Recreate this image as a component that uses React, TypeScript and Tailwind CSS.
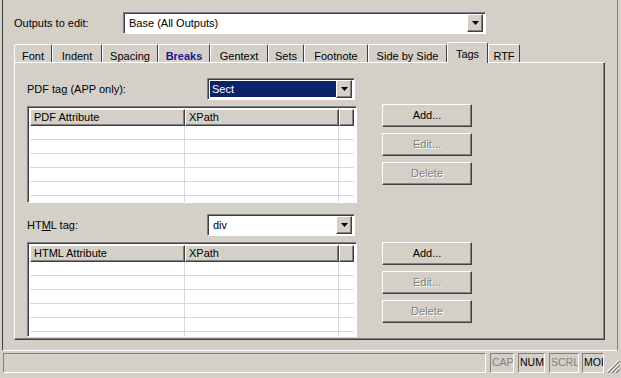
const raised =
  "border border-t-white border-l-white border-r-[#404040] border-b-[#404040] shadow-[inset_-1px_-1px_0_#808080]";
const sunken =
  "border border-t-[#808080] border-l-[#808080] border-r-white border-b-white shadow-[inset_1px_1px_0_#404040]";
const disabledText = "text-[#808080] [text-shadow:1px_1px_0_#ffffff]";

const tabs = [
  { label: "Font", w: "w-[38px]" },
  { label: "Indent", w: "w-[50px]" },
  { label: "Spacing", w: "w-[56px]" },
  { label: "Breaks", w: "w-[52px]", hot: true },
  { label: "Gentext", w: "w-[58px]" },
  { label: "Sets", w: "w-[36px]" },
  { label: "Footnote", w: "w-[64px]" },
  { label: "Side by Side", w: "w-[79px]" },
  { label: "Tags", w: "w-[41px]", active: true },
  { label: "RTF", w: "w-[32px]" },
];

function DropButton() {
  return (
    <div className={`flex h-[18px] w-[16px] shrink-0 items-center justify-center bg-[#d4d0c8] ${raised}`}>
      <svg width="7" height="4" viewBox="0 0 7 4">
        <path d="M0 0h7L3.5 4z" fill="#000" />
      </svg>
    </div>
  );
}

function Select({ value, highlighted, width }: { value: string; highlighted?: boolean; width: string }) {
  return (
    <div className={`flex h-[22px] ${width} items-center bg-white p-[2px] ${sunken}`}>
      <div
        className={
          highlighted
            ? "flex h-full flex-1 items-center bg-[#0a246a] pl-[2px] text-white"
            : "flex h-full flex-1 items-center pl-[3px] text-black"
        }
      >
        {value}
      </div>
      <DropButton />
    </div>
  );
}

function Button({ label, disabled }: { label: string; disabled?: boolean }) {
  return (
    <div
      className={`flex h-[23px] w-[90px] items-center justify-center bg-[#d4d0c8] ${raised} ${
        disabled ? disabledText : "text-black"
      }`}
    >
      {label}
    </div>
  );
}

function AttrTable({ first, height }: { first: string; height: string }) {
  return (
    <div className={`flex w-[330px] ${height} flex-col overflow-hidden bg-white p-[2px] ${sunken}`}>
      <div className="flex h-[17px] shrink-0 bg-[#d4d0c8]">
        <div className={`flex w-[155px] items-center pl-[3px] ${raised}`}>{first}</div>
        <div className={`flex w-[154px] items-center pl-[3px] ${raised}`}>XPath</div>
        <div className={`flex-1 ${raised}`} />
      </div>
      {[0, 1, 2, 3, 4, 5].map((i) => (
        <div key={i} className="flex h-[14px] shrink-0 border-b border-[#d8d8d8]">
          <div className="w-[155px] border-r border-[#d8d8d8]" />
          <div className="w-[154px] border-r border-[#d8d8d8]" />
        </div>
      ))}
    </div>
  );
}

function StatusPane({ label, disabled, w }: { label: string; disabled?: boolean; w: string }) {
  return (
    <div
      className={`flex h-[20px] ${w} shrink-0 items-center overflow-hidden whitespace-nowrap border border-t-[#808080] border-l-[#808080] border-r-white border-b-white pl-px text-[10.5px] ${
        disabled ? "text-[#808080]" : "text-black"
      }`}
    >
      {label}
    </div>
  );
}

export default function App() {
  return (
    <div className="flex h-[378px] w-[621px] flex-col overflow-hidden bg-[#d4d0c8] font-['Liberation_Sans',Arial,sans-serif] text-[11px] text-black">
      <div className="ml-[2px] mr-[3px] flex h-[351px] shrink-0 flex-col border-l border-r border-b border-l-[#404040] border-r-[#808080] border-b-white pl-[11px] pr-[10px]">
        <div className="mt-[12px] flex h-[22px] items-center">
          <div className="w-[109px]">Outputs to edit:</div>
          <Select value="Base (All Outputs)" width="w-[363px]" />
        </div>

        <div className="mt-[8px] flex h-[20px] items-end">
          {tabs.map((t) =>
            t.active ? (
              <div
                key={t.label}
                className={`relative z-10 -mb-px flex h-[21px] ${t.w} items-start justify-center rounded-t-[2px] border-t border-l border-r border-t-white border-l-white border-r-[#404040] bg-[#d4d0c8] pt-[3px]`}
              >
                {t.label}
              </div>
            ) : (
              <div
                key={t.label}
                className={`flex h-[18px] ${t.w} items-start justify-center rounded-t-[2px] border-t border-l border-r border-t-white border-l-white border-r-[#404040] pt-[3px] ${
                  t.hot ? "font-bold text-[#1a1a9a]" : ""
                }`}
              >
                {t.label}
              </div>
            )
          )}
        </div>

        <div className={`flex h-[278px] w-[591px] flex-col pl-[12px] pt-[15px] ${raised}`}>
          <div className="flex">
            <div className="flex w-[330px] flex-col">
              <div className="flex h-[22px] items-center">
                <div className="w-[180px]">
                  PDF ta<span className="underline">g</span> (APP only):
                </div>
                <Select value="Sect" highlighted width="w-[148px]" />
              </div>
              <div className="mt-[6px]">
                <AttrTable first="PDF Attribute" height="h-[97px]" />
              </div>
            </div>
            <div className="ml-[25px] mt-[26px] flex flex-col gap-[6px]">
              <Button label="Add..." />
              <Button label="Edit..." disabled />
              <Button label="Delete" disabled />
            </div>
          </div>

          <div className="mt-[11px] flex">
            <div className="flex w-[330px] flex-col">
              <div className="flex h-[22px] items-center">
                <div className="w-[180px]">
                  HT<span className="underline">M</span>L tag:
                </div>
                <Select value="div" width="w-[148px]" />
              </div>
              <div className="mt-[6px]">
                <AttrTable first="HTML Attribute" height="h-[95px]" />
              </div>
            </div>
            <div className="ml-[25px] mt-[28px] flex flex-col gap-[6px]">
              <Button label="Add..." />
              <Button label="Edit..." disabled />
              <Button label="Delete" disabled />
            </div>
          </div>
        </div>
      </div>

      <div className="mt-[2px] flex items-center pl-[3px]">
        <StatusPane label="" w="w-[483px]" />
        <div className="ml-[4px]">
          <StatusPane label="CAP" disabled w="w-[24px]" />
        </div>
        <div className="ml-[4px]">
          <StatusPane label="NUM" w="w-[27px]" />
        </div>
        <div className="ml-[4px]">
          <StatusPane label="SCRL" disabled w="w-[30px]" />
        </div>
        <div className="ml-[3px]">
          <StatusPane label="MOD" w="w-[22px]" />
        </div>
        <svg width="14" height="14" viewBox="0 0 14 14" className="ml-[2px] mt-[5px] shrink-0">
          <path d="M13 1L1 13M13 5L5 13M13 9L9 13" stroke="#fff" strokeWidth="1" />
          <path d="M14 2L2 14M14 6L6 14M14 10L10 14" stroke="#808080" strokeWidth="1.2" />
        </svg>
      </div>
    </div>
  );
}
